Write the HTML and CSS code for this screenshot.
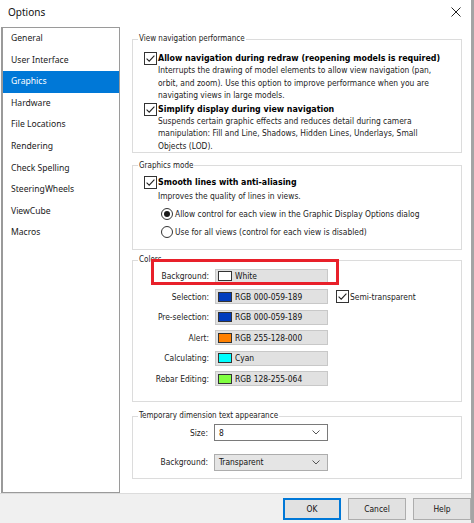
FILE: index.html
```html
<!DOCTYPE html>
<html lang="en">
<head>
<meta charset="utf-8">
<title>Options</title>
<link rel="stylesheet" href="styles.css">
</head>
<body>
<div class="window">
  <div class="titlebar">
    <span class="title">Options</span>
    <svg class="close" width="10" height="10" viewBox="0 0 10 10"><path d="M0.5 0.5 L9.5 9.5 M9.5 0.5 L0.5 9.5" stroke="#222" stroke-width="1" fill="none"/></svg>
  </div>
  <div class="main">
    <ul class="nav">
      <li>General</li>
      <li>User Interface</li>
      <li class="active">Graphics</li>
      <li>Hardware</li>
      <li>File Locations</li>
      <li>Rendering</li>
      <li>Check Spelling</li>
      <li>SteeringWheels</li>
      <li>ViewCube</li>
      <li>Macros</li>
    </ul>
    <div class="panel">
      <fieldset class="group g-nav">
        <legend>View navigation performance</legend>
        <div class="opt">
          <svg class="cb" width="13" height="13" viewBox="0 0 13 13"><rect x="0.5" y="0.5" width="12" height="12" fill="#fff" stroke="#333"/><path d="M2.6 6.6 L5.2 9.2 L10.4 3.6" fill="none" stroke="#222" stroke-width="1.1"/></svg>
          <div class="opt-body">
            <div class="opt-title">Allow navigation during redraw (reopening models is required)</div>
            <div class="desc">Interrupts the drawing of model elements to allow view navigation (pan,<br>orbit, and zoom). Use this option to improve performance when you are<br>navigating views in large models.</div>
          </div>
        </div>
        <div class="opt">
          <svg class="cb" width="13" height="13" viewBox="0 0 13 13"><rect x="0.5" y="0.5" width="12" height="12" fill="#fff" stroke="#333"/><path d="M2.6 6.6 L5.2 9.2 L10.4 3.6" fill="none" stroke="#222" stroke-width="1.1"/></svg>
          <div class="opt-body">
            <div class="opt-title">Simplify display during view navigation</div>
            <div class="desc">Suspends certain graphic effects and reduces detail during camera<br>manipulation: Fill and Line, Shadows, Hidden Lines, Underlays, Small<br>Objects (LOD).</div>
          </div>
        </div>
      </fieldset>

      <fieldset class="group g-mode">
        <legend>Graphics mode</legend>
        <div class="opt">
          <svg class="cb" width="13" height="13" viewBox="0 0 13 13"><rect x="0.5" y="0.5" width="12" height="12" fill="#fff" stroke="#333"/><path d="M2.6 6.6 L5.2 9.2 L10.4 3.6" fill="none" stroke="#222" stroke-width="1.1"/></svg>
          <div class="opt-body">
            <div class="opt-title">Smooth lines with anti-aliasing</div>
            <div class="desc">Improves the quality of lines in views.</div>
          </div>
        </div>
        <div class="radios">
          <div class="radio">
            <svg width="12" height="12" viewBox="0 0 12 12"><circle cx="6" cy="6" r="5.5" fill="#fff" stroke="#333"/><circle cx="6" cy="6" r="3" fill="#1a1a1a"/></svg>
            <span>Allow control for each view in the Graphic Display Options dialog</span>
          </div>
          <div class="radio">
            <svg width="12" height="12" viewBox="0 0 12 12"><circle cx="6" cy="6" r="5.5" fill="#fff" stroke="#333"/></svg>
            <span>Use for all views (control for each view is disabled)</span>
          </div>
        </div>
      </fieldset>

      <fieldset class="group g-colors">
        <legend>Colors</legend>
        <div class="highlight"></div>
        <div class="color-grid">
          <span class="lbl">Background:</span>
          <span class="swatch"><i class="chip" style="background:#ffffff"></i>White</span>
          <span></span>

          <span class="lbl">Selection:</span>
          <span class="swatch"><i class="chip" style="background:#003bbd"></i>RGB 000-059-189</span>
          <span class="semi">
            <svg class="cb" width="13" height="13" viewBox="0 0 13 13"><rect x="0.5" y="0.5" width="12" height="12" fill="#fff" stroke="#333"/><path d="M2.6 6.6 L5.2 9.2 L10.4 3.6" fill="none" stroke="#222" stroke-width="1.1"/></svg>
            Semi-transparent
          </span>

          <span class="lbl">Pre-selection:</span>
          <span class="swatch"><i class="chip" style="background:#003bbd"></i>RGB 000-059-189</span>
          <span></span>

          <span class="lbl">Alert:</span>
          <span class="swatch"><i class="chip" style="background:#ff8000"></i>RGB 255-128-000</span>
          <span></span>

          <span class="lbl">Calculating:</span>
          <span class="swatch"><i class="chip" style="background:#00ffff"></i>Cyan</span>
          <span></span>

          <span class="lbl">Rebar Editing:</span>
          <span class="swatch"><i class="chip" style="background:#80ff40"></i>RGB 128-255-064</span>
          <span></span>
        </div>
      </fieldset>

      <fieldset class="group g-temp">
        <legend>Temporary dimension text appearance</legend>
        <div class="temp-grid">
          <span class="lbl">Size:</span>
          <span class="select white">8<svg class="chev" width="8" height="5" viewBox="0 0 8 5"><path d="M0.5 0.5 L4 4 L7.5 0.5" fill="none" stroke="#555" stroke-width="1"/></svg></span>
          <span class="lbl">Background:</span>
          <span class="select gray">Transparent<svg class="chev" width="8" height="5" viewBox="0 0 8 5"><path d="M0.5 0.5 L4 4 L7.5 0.5" fill="none" stroke="#555" stroke-width="1"/></svg></span>
        </div>
      </fieldset>
    </div>
  </div>
  <div class="footer">
    <button class="btn default">OK</button>
    <button class="btn">Cancel</button>
    <button class="btn">Help</button>
  </div>
</div>
</body>
</html>
```

FILE: styles.css
```css
* { box-sizing: border-box; }
html, body { margin: 0; padding: 0; background: #fff; }
body { font-family: "DejaVu Sans Condensed", "DejaVu Sans", sans-serif; font-size: 8.4px; color: #1a1a1a; }

.window {
  width: 474px;
  height: 523px;
  display: flex;
  flex-direction: column;
  background: #fff;
  border-right: 3px solid #a4a4a4;
  position: relative;
}

.titlebar {
  height: 27px;
  display: flex;
  align-items: center;
  justify-content: space-between;
  padding: 0 7px 3px 8px;
}
.title { font-family: "Noto Sans", sans-serif; font-size: 10px; color: #111; }
.close { margin-right: 3px; }

.main {
  height: 467px;
  display: flex;
  border-bottom: 1px solid #dcdcdc;
}

.nav {
  list-style: none;
  margin: 0 0 0 1px;
  padding: 0;
  width: 119px;
  height: 466px;
  border: 1px solid #9a9a9a;
  border-left-width: 2px;
  font-family: "Noto Sans", sans-serif;
  font-size: 8.6px;
  color: #1a1a1a;
}
.nav li {
  height: 21.6px;
  line-height: 21.6px;
  padding-left: 8px;
}
.nav li.active { background: #0078d7; color: #fff; }

.panel {
  flex: 1;
  padding: 6px 0 0 12px;
  display: flex;
  flex-direction: column;
}

.group {
  width: 330px;
  margin: 0;
  border: 1px solid #dcdcdc;
  padding: 0;
  position: relative;
}
.group legend {
  margin-left: 5px;
  padding: 0 1px;
  font-size: 8px;
  line-height: 12px;
  color: #222;
}

.opt { display: flex; align-items: flex-start; gap: 1px; padding-left: 11px; }
.cb { flex: none; }
.opt-body { line-height: 12.4px; }
.opt-title { font-weight: bold; font-size: 8.8px; color: #000; }
.desc { color: #222; }

.g-nav { padding-bottom: 0; }
.g-nav .opt:first-of-type { margin-top: 7px; }
.g-nav .opt + .opt { margin-top: 1px; }

.g-mode { margin-top: 6.6px; padding-bottom: 11px; }
.g-mode .opt { margin-top: 3.8px; }
.g-mode .desc { margin-top: 2px; }
.radios { padding-left: 28px; margin-top: 5.4px; display: flex; flex-direction: column; gap: 6px; }
.radio { display: flex; align-items: center; gap: 2px; height: 12px; }

.g-colors { margin-top: 4.6px; padding-bottom: 14.8px; }
.color-grid {
  margin-top: 2.2px;
  display: grid;
  grid-template-columns: 76px 113px auto;
  grid-auto-rows: 15px;
  column-gap: 6px;
  row-gap: 5.5px;
  align-items: center;
}
.lbl { text-align: right; color: #222; }
.swatch {
  height: 15px;
  display: flex;
  align-items: center;
  background: #e1e1e1;
  border: 1px solid #c8c8c8;
  padding-left: 2px;
  gap: 3px;
  color: #111;
}
.chip {
  display: block;
  width: 14px;
  height: 10px;
  border: 1px solid #333;
}
.semi { display: flex; align-items: center; gap: 1px; margin-left: 2px; }

.highlight {
  position: absolute;
  left: 18px;
  top: -7px;
  width: 188px;
  height: 26px;
  border: 3px solid #e8202a;
  pointer-events: none;
}

.g-temp { margin-top: 8.5px; padding-bottom: 7.7px; }
.temp-grid {
  margin-top: 1.7px;
  display: grid;
  grid-template-columns: 75px 114px;
  column-gap: 6px;
  row-gap: 12.4px;
  align-items: center;
}
.select {
  height: 17px;
  display: flex;
  align-items: center;
  justify-content: space-between;
  padding: 0 7px 0 4px;
  color: #111;
}
.select.white { background: #fff; border: 1px solid #7a7a7a; }
.select.gray { background: #e5e5e5; border: 1px solid #adadad; }

.footer {
  flex: 1;
  background: #f0f0f0;
  display: flex;
  justify-content: flex-end;
  align-items: flex-start;
  padding: 4px 0 0 0;
  gap: 7px;
}
.btn {
  width: 58px;
  height: 22px;
  margin: 0;
  padding: 0;
  background: #e1e1e1;
  border: 1px solid #adadad;
  font-family: "DejaVu Sans Condensed", "DejaVu Sans", sans-serif;
  font-size: 8.4px;
  color: #111;
}
.btn.default { border: 1px solid #0078d7; box-shadow: inset 0 0 0 1px #0078d7; }
```
